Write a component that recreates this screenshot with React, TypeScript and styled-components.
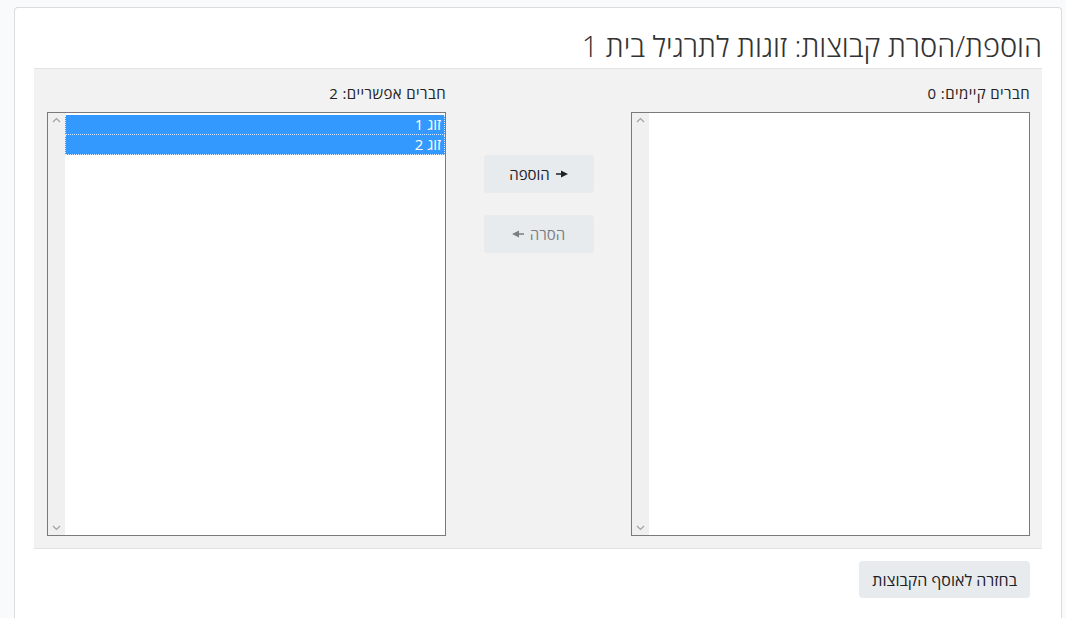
import React from "react";
import styled, { createGlobalStyle } from "styled-components";

const GlobalStyle = createGlobalStyle`
  html, body {
    margin: 0;
    padding: 0;
    background: #f8fafc;
    font-family: "Open Sans", "Noto Sans", "DejaVu Sans", sans-serif;
    color: #333;
    overflow: hidden;
  }
`;

const Page = styled.div`
  width: 1066px;
  height: 618px;
  padding: 7px 4px 0 14px;
  box-sizing: border-box;
`;

const Card = styled.div`
  direction: rtl;
  background: #fff;
  border: 1px solid #dcdcdc;
  border-bottom: none;
  border-radius: 4px 4px 0 0;
  height: 611px;
  box-sizing: border-box;
  padding: 18px 19px 0 19px;
`;

const Title = styled.h2`
  margin: 0 0 2px 0;
  font-size: 29px;
  font-weight: 300;
  line-height: 40px;
  color: #333;
`;

const Panel = styled.div`
  background: #f2f2f2;
  border-top: 1px solid #e2e2e2;
  border-bottom: 1px solid #e2e2e2;
  padding: 14px 12px 12px 13px;
  display: flex;
  align-items: flex-start;
`;

const Column = styled.div`
  width: 399px;
  display: flex;
  flex-direction: column;
`;

const Label = styled.div`
  font-size: 15px;
  letter-spacing: 0.4px;
  line-height: 20px;
  height: 20px;
  margin-bottom: 9px;
  color: #222;
`;

const ListBox = styled.div`
  height: 424px;
  border: 1px solid #7a7a7a;
  background: #fff;
  display: flex;
  box-sizing: border-box;
`;

const Options = styled.div`
  flex: 1;
  padding-top: 2px;
`;

const Option = styled.div`
  height: 20px;
  line-height: 19px;
  font-size: 15px;
  color: #fff;
  background: #3399ff;
  padding: 0 3px;
  border: 1px dotted rgba(255, 255, 255, 0.8);
  border-top-width: 0;
  box-sizing: border-box;
  &:first-child {
    border-top: none;
  }
`;

const Track = styled.div`
  width: 17px;
  background: #f0f0f0;
  display: flex;
  flex-direction: column;
  justify-content: space-between;
  align-items: center;
  padding: 4px 0;
`;

const Middle = styled.div`
  flex: 1;
  display: flex;
  flex-direction: column;
  align-items: center;
  gap: 22px;
  padding-top: 72px;
`;

const MoveButton = styled.button<{ disabled?: boolean }>`
  width: 110px;
  height: 38px;
  border: none;
  border-radius: 3px;
  background: #e8ebee;
  color: ${({ disabled }) => (disabled ? "#7b7e82" : "#1d2125")};
  font-family: inherit;
  font-size: 15px;
  display: flex;
  align-items: center;
  justify-content: center;
  gap: 6px;
  direction: ltr;
  padding: 0;
`;

const Footer = styled.div`
  display: flex;
  justify-content: flex-start;
  padding: 12px 12px 0;
`;

const BackButton = styled.button`
  height: 37px;
  padding: 0 13px;
  border: none;
  border-radius: 4px;
  background: #e8ebee;
  color: #1d2125;
  font-family: inherit;
  font-size: 16px;
`;

const Chevron = ({ up }: { up?: boolean }) => (
  <svg width="9" height="6" viewBox="0 0 9 6">
    <path
      d={up ? "M1 5 L4.5 1.5 L8 5" : "M1 1 L4.5 4.5 L8 1"}
      fill="none"
      stroke="#a3a3a3"
      strokeWidth="1.2"
    />
  </svg>
);

const Arrow = ({ left }: { left?: boolean }) => (
  <svg width="12" height="8" viewBox="0 0 12 8" style={left ? { transform: "scaleX(-1)" } : undefined}>
    <path d="M0 3.2 H6 V4.8 H0 Z M5 0.5 L12 4 L5 7.5 Z" fill="currentColor" />
  </svg>
);

const List = ({ items }: { items: string[] }) => (
  <ListBox>
    <Options>
      {items.map((i) => (
        <Option key={i}>{i}</Option>
      ))}
    </Options>
    <Track>
      <Chevron up />
      <Chevron />
    </Track>
  </ListBox>
);

export default function App() {
  return (
    <>
      <GlobalStyle />
      <Page>
        <Card>
          <Title>הוספת/הסרת קבוצות: זוגות לתרגיל בית 1</Title>
          <Panel>
            <Column>
              <Label>חברים קיימים: 0</Label>
              <List items={[]} />
            </Column>
            <Middle>
              <MoveButton>
                <span>הוספה</span>
                <Arrow />
              </MoveButton>
              <MoveButton disabled>
                <Arrow left />
                <span>הסרה</span>
              </MoveButton>
            </Middle>
            <Column>
              <Label>חברים אפשריים: 2</Label>
              <List items={["זוג 1", "זוג 2"]} />
            </Column>
          </Panel>
          <Footer>
            <BackButton>בחזרה לאוסף הקבוצות</BackButton>
          </Footer>
        </Card>
      </Page>
    </>
  );
}
